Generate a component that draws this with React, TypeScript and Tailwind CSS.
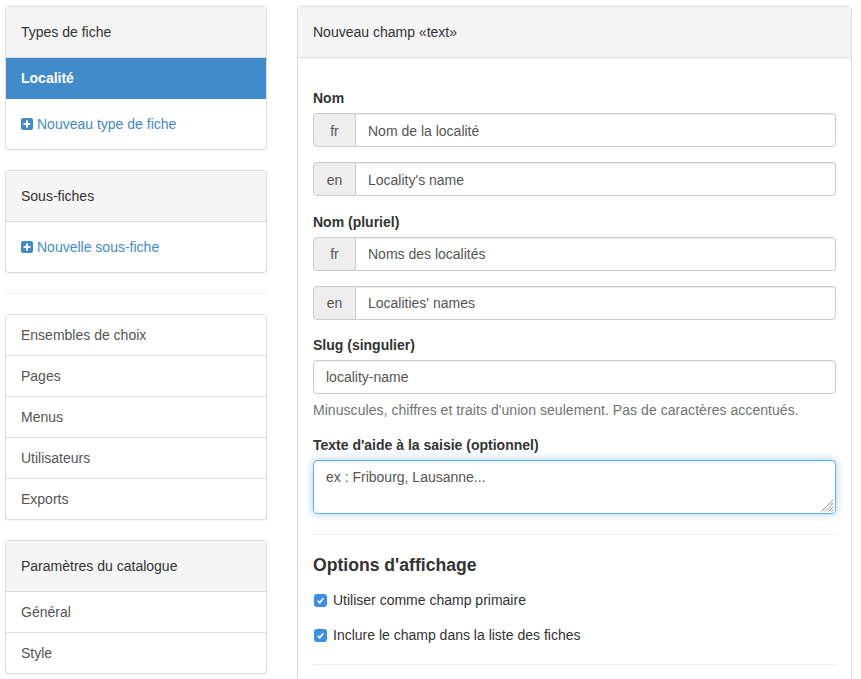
import { ReactNode } from 'react'

// Small solid "plus in a square" icon used by the add links
function PlusSquare() {
  return (
    <svg width="12" height="12" viewBox="0 0 12 12" className="mr-1 inline-block align-[-1px]">
      <rect width="12" height="12" rx="2" fill="#428bca" />
      <path d="M6 2.6v6.8M2.6 6h6.8" stroke="#fff" strokeWidth="2" />
    </svg>
  )
}

function Panel({ title, children }: { title: string; children: ReactNode }) {
  return (
    <div className="overflow-hidden rounded border border-[#ddd] bg-white shadow-[0_1px_1px_rgba(0,0,0,0.05)]">
      <div className="h-[51px] border-b border-[#ddd] bg-[#f5f5f5] px-[15px] pt-[15px] leading-[20px] text-[#333]">
        {title}
      </div>
      {children}
    </div>
  )
}

function AddLink({ label }: { label: string }) {
  return (
    <div className="h-[50px] px-[15px] pt-[15px] leading-[20px] text-[#428bca]">
      <PlusSquare />
      {label}
    </div>
  )
}

function ListItem({ label }: { label: string }) {
  return <div className="h-[41px] border-b border-[#ddd] px-[15px] pt-[10px] leading-[20px] text-[#555] last:h-[40px] last:border-b-0">{label}</div>
}

// The first group sits a pixel lower inside its boxes, hence textClass
function LangInput({ lang, value, textClass }: { lang: string; value: string; textClass?: string }) {
  return (
    <div className="flex h-[34px]">
      <span className={`flex w-[43px] items-center justify-center rounded-l border border-[#ccc] bg-[#eee] text-[#555] ${textClass ?? ''}`}>{lang}</span>
      <input
        readOnly
        value={value}
        className={`min-w-0 flex-1 rounded-r border border-l-0 border-[#ccc] bg-white px-3 text-[#555] shadow-[inset_0_1px_1px_rgba(0,0,0,0.075)] outline-none ${textClass ?? ''}`}
      />
    </div>
  )
}

function Check({ label, className }: { label: string; className?: string }) {
  return (
    <div className={`flex h-5 items-center text-[#333] ${className ?? ''}`}>
      <span className="ml-px mr-[6px] flex h-[13px] w-[13px] items-center justify-center rounded-[3px] bg-[#3d8fe6]">
        <svg width="9" height="9" viewBox="0 0 9 9" fill="none">
          <path d="M1.6 4.7 3.6 6.7 7.4 2.2" stroke="#fff" strokeWidth="1.6" />
        </svg>
      </span>
      {label}
    </div>
  )
}

function FieldLabel({ children, className }: { children: ReactNode; className?: string }) {
  return <div className={`mb-[5px] font-bold leading-[20px] text-[#333] ${className ?? ''}`}>{children}</div>
}

export default function App() {
  return (
    <div className="flex h-[679px] items-start gap-[30px] overflow-hidden bg-white pl-[5px] pt-[6px] font-['Liberation_Sans',sans-serif] text-[14px]">
      <aside className="w-[262px] shrink-0">
        <Panel title="Types de fiche">
          <div className="h-[41px] bg-[#428bca] px-[15px] pt-[10px] font-bold leading-[20px] text-white">Localité</div>
          <AddLink label="Nouveau type de fiche" />
        </Panel>

        <div className="mt-5">
          <Panel title="Sous-fiches">
            <AddLink label="Nouvelle sous-fiche" />
          </Panel>
        </div>

        <hr className="mb-5 mt-5 border-[#eee]" />

        <div className="overflow-hidden rounded border border-[#ddd] bg-white shadow-[0_1px_1px_rgba(0,0,0,0.05)]">
          <ListItem label="Ensembles de choix" />
          <ListItem label="Pages" />
          <ListItem label="Menus" />
          <ListItem label="Utilisateurs" />
          <ListItem label="Exports" />
        </div>

        <div className="mt-5">
          <Panel title="Paramètres du catalogue">
            <ListItem label="Général" />
            <ListItem label="Style" />
          </Panel>
        </div>
      </aside>

      <main className="w-[555px] shrink-0 rounded border border-[#ddd] bg-white">
        <div className="h-[51px] border-b border-[#ddd] bg-[#f5f5f5] px-[15px] pt-[15px] leading-[20px] text-[#333]">
          Nouveau champ «text»
        </div>
        <div className="px-[15px] pb-[40px] pt-[30px]">
          <FieldLabel>Nom</FieldLabel>
          <LangInput lang="fr" value="Nom de la localité" textClass="pt-[2px]" />
          <div className="mt-[15px]">
            <LangInput lang="en" value="Locality's name" textClass="pt-[2px]" />
          </div>

          <FieldLabel className="mt-[16px]">Nom (pluriel)</FieldLabel>
          <LangInput lang="fr" value="Noms des localités" />
          <div className="mt-[15px]">
            <LangInput lang="en" value="Localities' names" />
          </div>

          <FieldLabel className="mt-[15px]">Slug (singulier)</FieldLabel>
          <input
            readOnly
            value="locality-name"
            className="block h-[34px] w-full rounded border border-[#ccc] px-3 text-[#555] shadow-[inset_0_1px_1px_rgba(0,0,0,0.075)] outline-none"
          />
          <p className="mt-[6px] leading-[20px] tracking-[0.05px] text-[#737373]">
            Minuscules, chiffres et traits d'union seulement. Pas de caractères accentués.
          </p>

          <FieldLabel className="mt-[15px]">Texte d'aide à la saisie (optionnel)</FieldLabel>
          <div className="relative">
            <textarea
              readOnly
              value="ex : Fribourg, Lausanne..."
              className="block h-[54px] w-full resize-none rounded border border-[#66afe9] px-3 py-[6px] leading-[20px] text-[#555] shadow-[inset_0_1px_1px_rgba(0,0,0,0.075),0_0_8px_rgba(102,175,233,0.6)] outline-none"
            />
            {/* resize grip */}
            <svg width="13" height="13" viewBox="0 0 13 13" className="absolute bottom-[2px] right-[2px]" stroke="#8f8f8f" strokeWidth="1">
              <path d="M0.5 12.5 12.5 0.5M4 12.5 12.5 4M7.5 12.5 12.5 7.5M10.5 12.5 12.5 10.5" />
            </svg>
          </div>

          <hr className="mt-5 border-[#eee]" />

          <h4 className="mt-5 text-[17.6px] font-bold leading-[20px] text-[#333]">Options d'affichage</h4>
          <Check label="Utiliser comme champ primaire" className="mt-[15px]" />
          <Check label="Inclure le champ dans la liste des fiches" className="mt-[15px]" />

          <hr className="mt-[19px] border-[#eee]" />
        </div>
      </main>
    </div>
  )
}
